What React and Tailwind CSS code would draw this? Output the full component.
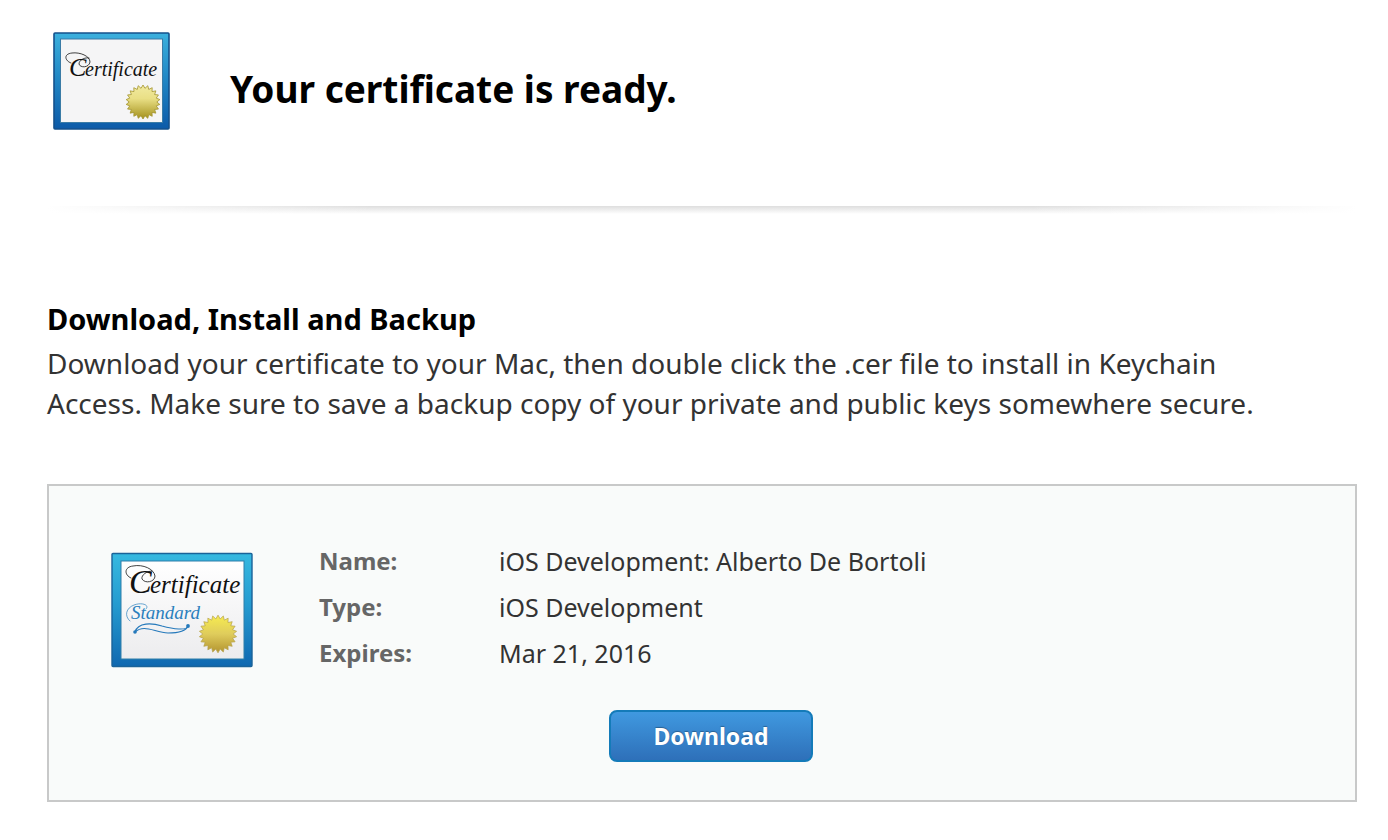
const sealPoints = (cx, cy, outer, inner, teeth) =>
  Array.from({ length: teeth * 2 }, (_, i) => {
    const r = i % 2 ? inner : outer;
    const a = (Math.PI * i) / teeth - Math.PI / 2;
    return `${(cx + r * Math.cos(a)).toFixed(2)},${(cy + r * Math.sin(a)).toFixed(2)}`;
  }).join(" ");

function CertificateIcon() {
  return (
    <svg className="h-[98px] w-[117px] shrink-0" viewBox="0 0 117 98" aria-hidden="true">
      <defs>
        <linearGradient id="frameA" x1="0" y1="0" x2="0" y2="1">
          <stop offset="0" stopColor="#3bb0dd" />
          <stop offset="0.45" stopColor="#2289c6" />
          <stop offset="1" stopColor="#0c5aa8" />
        </linearGradient>
        <linearGradient id="sealA" x1="0" y1="0" x2="0" y2="1">
          <stop offset="0" stopColor="#f1eaa0" />
          <stop offset="0.4" stopColor="#e9df85" />
          <stop offset="1" stopColor="#a4911c" />
        </linearGradient>
      </defs>
      <rect x="1" y="1" width="115" height="96" rx="1" fill="url(#frameA)" stroke="#14518c" strokeWidth="1.6" />
      <rect x="7.5" y="7" width="102" height="83.5" fill="#f5f5f6" stroke="#3a7ba6" strokeWidth="1" />
      <path
        d="M18 31C12 29 10 22 19 21C27 20 37 24 37 30C36 36 27 36 26 32C26 28 32 25 36 26"
        fill="none"
        stroke="#111"
        strokeWidth="0.8"
        strokeLinecap="round"
      />
      <text x="16" y="44" fill="#111" className="font-['Liberation_Serif',serif] text-[26px] italic">
        C
      </text>
      <text x="32" y="44" fill="#111" className="font-['Liberation_Serif',serif] text-[20px] italic">
        ertificate
      </text>
      <polygon points={sealPoints(90, 70, 17, 13.8, 22)} fill="url(#sealA)" stroke="#a3942f" strokeWidth="0.8" />
    </svg>
  );
}

function StandardCertificateIcon() {
  return (
    <svg className="mt-3.5 h-[116px] w-[142px] shrink-0" viewBox="0 0 142 116" aria-hidden="true">
      <defs>
        <linearGradient id="frameB" x1="0" y1="0" x2="0" y2="1">
          <stop offset="0" stopColor="#36b9e0" />
          <stop offset="0.45" stopColor="#259bd0" />
          <stop offset="1" stopColor="#0f68b0" />
        </linearGradient>
        <linearGradient id="paperB" x1="0" y1="0" x2="0" y2="1">
          <stop offset="0" stopColor="#ffffff" />
          <stop offset="1" stopColor="#ececee" />
        </linearGradient>
        <linearGradient id="sealB" x1="0" y1="0" x2="0" y2="1">
          <stop offset="0" stopColor="#f7ec50" />
          <stop offset="0.5" stopColor="#dfcc5c" />
          <stop offset="1" stopColor="#b3942f" />
        </linearGradient>
      </defs>
      <rect x="1" y="1.5" width="140" height="113" rx="1" fill="url(#frameB)" stroke="#1a6399" strokeWidth="1.4" />
      <rect x="10" y="9" width="123" height="98" fill="url(#paperB)" stroke="#2e7fa9" strokeWidth="1" />
      <path
        d="M20 26C13 23 13 15 22 14C32 12 43 17 44 24C44 30 34 32 31 27C30 23 36 19 41 19"
        fill="none"
        stroke="#111"
        strokeWidth="0.8"
        strokeLinecap="round"
      />
      <text x="18" y="41" fill="#111" className="font-['Liberation_Serif',serif] text-[34px] italic">
        C
      </text>
      <text x="39" y="41" fill="#111" className="font-['Liberation_Serif',serif] text-[25px] italic">
        ertificate
      </text>
      <path
        d="M19 69C13 64 15 56 23 53C31 50 39 53 35 57"
        fill="none"
        stroke="#2a7fbd"
        strokeWidth="0.7"
        strokeLinecap="round"
      />
      <text x="20" y="67" fill="#2a7fbd" className="font-['Liberation_Serif',serif] text-[19px] italic">
        Standard
      </text>
      <g fill="none" stroke="#2579bb" strokeWidth="1.1" strokeLinecap="round">
        <path d="M24 80C27 70 41 71 51 74C62 77 76 79 77 74" />
        <path d="M24 80C33 72 43 80 57 81C66 81 75 79 77 74" />
      </g>
      <circle cx="24" cy="80" r="1.8" fill="#2579bb" />
      <circle cx="77" cy="74" r="1.9" fill="#2579bb" />
      <polygon points={sealPoints(107, 82, 18.8, 15.2, 22)} fill="url(#sealB)" stroke="#b5a048" strokeWidth="0.7" />
    </svg>
  );
}

const details = [
  ["Name:", "iOS Development: Alberto De Bortoli"],
  ["Type:", "iOS Development"],
  ["Expires:", "Mar 21, 2016"],
];

export default function App() {
  return (
    <main className="min-h-screen bg-white pt-8 pr-[31px] pb-9 pl-[47px] font-['Noto_Sans','Open_Sans',sans-serif] text-[#333]">
      <header className="flex items-center gap-[60px] pl-1.5">
        <CertificateIcon />
        <h1 className="mt-4 text-[37px] leading-[48px] font-bold text-black">Your certificate is ready.</h1>
      </header>

      <div className="mt-[76px] h-2 bg-linear-to-b from-[#dedede] to-white" aria-hidden="true">
        <div className="h-full bg-[linear-gradient(to_right,#fff,#fff0_25%,#fff0_75%,#fff)]" />
      </div>

      <section className="mt-[85px]">
        <h2 className="text-[29px] leading-10 font-bold text-black">Download, Install and Backup</h2>
        <p className="mt-1 max-w-[1250px] text-[28px] leading-10">
          Download your certificate to your Mac, then double click the .cer file to install in Keychain Access. Make
          sure to save a backup copy of your private and public keys somewhere secure.
        </p>
      </section>

      <section className="mt-[61px] border-2 border-[#c8c9c9] bg-[#f9fbfa] px-[62px] pt-[52px] pb-[38px]">
        <div className="flex items-start gap-[66px]">
          <StandardCertificateIcon />
          <dl className="grid grid-cols-[180px_1fr] text-[24px] leading-[46px]">
            {details.map(([label, value]) => (
              <div key={label} className="col-span-2 grid grid-cols-subgrid">
                <dt className="font-bold text-[#666]">{label}</dt>
                <dd className="text-[25px]">{value}</dd>
              </div>
            ))}
          </dl>
        </div>
        <div className="mt-[34px] flex justify-center pl-[18px]">
          <button
            type="button"
            className="h-[52px] w-[204px] rounded-lg border-2 border-[#147bb9] bg-linear-to-b from-[#4099e0] to-[#2e70b9] text-[23px] leading-8 font-bold text-white text-shadow-[0_-1px_1px_rgb(0_0_0_/_0.3)]"
          >
            Download
          </button>
        </div>
      </section>
    </main>
  );
}
